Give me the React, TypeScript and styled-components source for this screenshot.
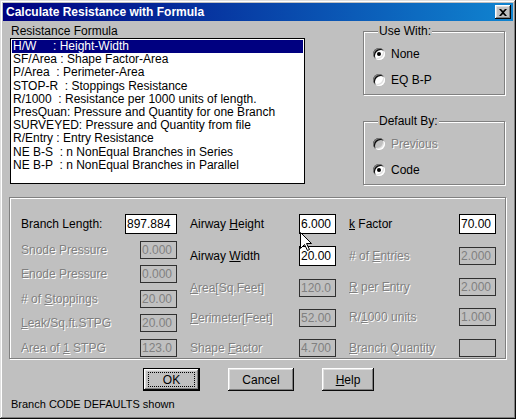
import React from 'react';
import styled, { createGlobalStyle } from 'styled-components';

const GlobalStyle = createGlobalStyle`
  html, body {
    margin: 0;
    padding: 0;
    background: #c0c0c0;
  }
  body {
    font-family: "Liberation Sans", Arial, sans-serif;
    font-size: 12px;
    color: #000;
  }
`;

const Window = styled.div`
  position: relative;
  width: 516px;
  height: 419px;
  box-sizing: border-box;
  padding: 3px;
  background: #c0c0c0;
  box-shadow: inset -1px -1px #0a0a0a, inset 1px 1px #dfdfdf,
    inset -2px -2px #808080, inset 2px 2px #fff;
`;

const TitleBar = styled.div`
  height: 18px;
  display: flex;
  align-items: center;
  justify-content: space-between;
  padding: 0 2px 0 3px;
  background: linear-gradient(to right, #000080, #1084d0);
`;

const Title = styled.span`
  color: #fff;
  font-weight: bold;
  font-size: 12px;
`;

const CloseButton = styled.div`
  width: 16px;
  height: 14px;
  display: flex;
  align-items: center;
  justify-content: center;
  background: #c0c0c0;
  box-shadow: inset -1px -1px #0a0a0a, inset 1px 1px #fff,
    inset -2px -2px #808080, inset 2px 2px #dfdfdf;
`;

const Body = styled.div`
  padding: 4px 7px 0 7px;
`;

const TopRow = styled.div`
  display: flex;
  justify-content: space-between;
`;

const FormulaColumn = styled.div`
  width: 295px;
  display: flex;
  flex-direction: column;
`;

const Caption = styled.div`
  height: 13px;
  line-height: 13px;
  padding-left: 1px;
`;

const ListBox = styled.div`
  height: 146px;
  box-sizing: border-box;
  border: 1px solid #000;
  background: #fff;
  padding: 1px;
`;

const ListItem = styled.div<{ $selected?: boolean }>`
  height: 13.2px;
  line-height: 13px;
  padding-left: 1px;
  white-space: pre;
  background: ${(p) => (p.$selected ? '#000080' : 'transparent')};
  color: ${(p) => (p.$selected ? '#fff' : '#000')};
`;

const SideColumn = styled.div`
  width: 142px;
  display: flex;
  flex-direction: column;
  gap: 20px;
  margin-right: 1px;
`;

const Group = styled.fieldset`
  margin: 0;
  padding: 6px 0 4px 9px;
  min-width: 0;
  border: 1px solid #808080;
  box-shadow: inset 1px 1px #fff, 1px 1px #fff;
  display: flex;
  flex-direction: column;
  gap: 6px;
`;

const Legend = styled.legend`
  padding: 0 1px;
  margin-left: 5px;
  line-height: 13px;
  background: #c0c0c0;
`;

const RadioRow = styled.div<{ $disabled?: boolean }>`
  height: 20px;
  display: flex;
  align-items: center;
  gap: 6px;
  color: ${(p) => (p.$disabled ? '#808080' : '#000')};
  text-shadow: ${(p) => (p.$disabled ? '1px 1px #fff' : 'none')};
`;

const RadioDot = styled.span<{ $checked?: boolean; $disabled?: boolean }>`
  width: 12px;
  height: 12px;
  box-sizing: border-box;
  border-radius: 50%;
  background: ${(p) => (p.$disabled ? '#c0c0c0' : '#fff')};
  box-shadow: inset 1px 1px #808080, inset -1px -1px #fff,
    inset 2px 2px #0a0a0a, inset -2px -2px #dfdfdf;
  display: flex;
  align-items: center;
  justify-content: center;
  &::after {
    content: '';
    width: 4px;
    height: 4px;
    border-radius: 50%;
    background: #000;
    display: ${(p) => (p.$checked ? 'block' : 'none')};
  }
`;

const FieldsPanel = styled.div`
  margin: 12px 0 0 -1px;
  height: 162px;
  box-sizing: border-box;
  border: 1px solid #808080;
  box-shadow: inset 1px 1px #fff, 1px 1px #fff;
  padding: 16px 0 1px 11px;
  display: grid;
  grid-template-columns: 156px 146px 147px;
  column-gap: 13px;
`;

const FieldColumn = styled.div`
  display: flex;
  flex-direction: column;
  justify-content: space-between;
`;

const FieldRow = styled.div<{ $disabled?: boolean }>`
  display: flex;
  align-items: center;
  justify-content: space-between;
  white-space: nowrap;
  color: ${(p) => (p.$disabled ? '#808080' : '#000')};
  text-shadow: ${(p) => (p.$disabled ? '1px 1px #fff' : 'none')};
`;

const ValueBox = styled.div<{ $disabled?: boolean; $width: number }>`
  width: ${(p) => p.$width}px;
  height: ${(p) => (p.$disabled ? 18 : 20)}px;
  box-sizing: border-box;
  border: 1px solid ${(p) => (p.$disabled ? '#303030' : '#000')};
  background: ${(p) => (p.$disabled ? '#c0c0c0' : '#fff')};
  color: ${(p) => (p.$disabled ? '#808080' : '#000')};
  text-shadow: none;
  line-height: ${(p) => (p.$disabled ? 16 : 18)}px;
  padding-left: 1px;
  overflow: hidden;
`;

const Key = styled.span`
  text-decoration: underline;
`;

const ButtonRow = styled.div`
  margin-top: 9px;
  display: flex;
  justify-content: center;
  gap: 28px;
  padding-left: 1px;
`;

const Button = styled.div<{ $width: number; $default?: boolean }>`
  width: ${(p) => p.$width}px;
  height: 23px;
  box-sizing: border-box;
  display: flex;
  align-items: center;
  justify-content: center;
  background: #c0c0c0;
  border: ${(p) => (p.$default ? '1px solid #000' : 'none')};
  box-shadow: inset -1px -1px #0a0a0a, inset 1px 1px #fff,
    inset -2px -2px #808080, inset 2px 2px #dfdfdf;
`;

const FocusRing = styled.span`
  box-sizing: border-box;
  width: calc(100% - 8px);
  height: 15px;
  border: 1px dotted #000;
  display: flex;
  align-items: center;
  justify-content: center;
`;

const StatusText = styled.div`
  margin-top: 7px;
  padding-left: 1px;
  font-size: 11px;
`;

const Cursor = styled.svg`
  position: absolute;
  left: 300px;
  top: 232px;
`;

const formulas = [
  'H/W     : Height-Width',
  'SF/Area : Shape Factor-Area',
  'P/Area  : Perimeter-Area',
  'STOP-R  : Stoppings Resistance',
  'R/1000  : Resistance per 1000 units of length.',
  'PresQuan: Pressure and Quantity for one Branch',
  'SURVEYED: Pressure and Quantity from file',
  'R/Entry : Entry Resistance',
  'NE B-S  : n NonEqual Branches in Series',
  'NE B-P  : n NonEqual Branches in Parallel',
];

type Field = {
  label: React.ReactNode;
  value: string;
  disabled?: boolean;
  width?: number;
};

const columns: Field[][] = [
  [
    { label: 'Branch Length:', value: '897.884', width: 52 },
    { label: 'Snode Pressure', value: '0.000', disabled: true },
    { label: 'Enode Pressure', value: '0.000', disabled: true },
    { label: <># of <Key>S</Key>toppings</>, value: '20.00', disabled: true },
    { label: <><Key>L</Key>eak/Sq.ft.STPG</>, value: '20.00', disabled: true },
    { label: <>Area of <Key>1</Key> STPG</>, value: '123.0', disabled: true },
  ],
  [
    { label: <>Airway <Key>H</Key>eight</>, value: '6.000' },
    { label: <>Airway <Key>W</Key>idth</>, value: '20.00' },
    { label: <><Key>A</Key>rea[Sq.Feet]</>, value: '120.0', disabled: true },
    { label: <><Key>P</Key>erimeter[Feet]</>, value: '52.00', disabled: true },
    { label: <>Shape <Key>F</Key>actor</>, value: '4.700', disabled: true },
  ],
  [
    { label: <><Key>k</Key> Factor</>, value: '70.00' },
    { label: <># of <Key>E</Key>ntries</>, value: '2.000', disabled: true },
    { label: <><Key>R</Key> per Entry</>, value: '2.000', disabled: true },
    { label: <>R/<Key>1</Key>000 units</>, value: '1.000', disabled: true },
    { label: <><Key>B</Key>ranch Quantity</>, value: '', disabled: true },
  ],
];

function Radio(props: { label: string; checked?: boolean; disabled?: boolean }) {
  return (
    <RadioRow $disabled={props.disabled}>
      <RadioDot $checked={props.checked} $disabled={props.disabled} />
      {props.label}
    </RadioRow>
  );
}

function App() {
  return (
    <>
      <GlobalStyle />
      <Window>
        <TitleBar>
          <Title>Calculate Resistance with Formula</Title>
          <CloseButton>
            <svg width="8" height="7" viewBox="0 0 8 7">
              <path d="M0 0h2l2 2 2-2h2L5 3.5 8 7H6L4 5 2 7H0l3-3.5z" fill="#000" />
            </svg>
          </CloseButton>
        </TitleBar>
        <Body>
          <TopRow>
            <FormulaColumn>
              <Caption>Resistance Formula</Caption>
              <ListBox>
                {formulas.map((f, i) => (
                  <ListItem key={f} $selected={i === 0}>{f}</ListItem>
                ))}
              </ListBox>
            </FormulaColumn>
            <SideColumn>
              <Group>
                <Legend>Use With:</Legend>
                <Radio label="None" checked />
                <Radio label="EQ B-P" />
              </Group>
              <Group>
                <Legend>Default By:</Legend>
                <Radio label="Previous" disabled />
                <Radio label="Code" checked />
              </Group>
            </SideColumn>
          </TopRow>
          <FieldsPanel>
            {columns.map((col, ci) => (
              <FieldColumn key={ci}>
                {col.map((f, fi) => (
                  <FieldRow key={fi} $disabled={f.disabled}>
                    <span>{f.label}</span>
                    <ValueBox $disabled={f.disabled} $width={f.width ?? 37}>
                      {f.value}
                    </ValueBox>
                  </FieldRow>
                ))}
              </FieldColumn>
            ))}
          </FieldsPanel>
          <ButtonRow>
            <Button $width={57} $default>
              <FocusRing>OK</FocusRing>
            </Button>
            <Button $width={66}>Cancel</Button>
            <Button $width={52}>
              <span><Key>H</Key>elp</span>
            </Button>
          </ButtonRow>
          <StatusText>Branch CODE DEFAULTS shown</StatusText>
        </Body>
        <Cursor width="13" height="20" viewBox="0 0 13 20">
          <path
            d="M0.5 0.5 L0.5 16.5 L4.5 12.5 L7.5 18.5 L9.5 17.5 L6.5 11.5 L11.5 11.5 Z"
            fill="#fff"
            stroke="#000"
            strokeWidth="1"
          />
        </Cursor>
      </Window>
    </>
  );
}

export default App;
